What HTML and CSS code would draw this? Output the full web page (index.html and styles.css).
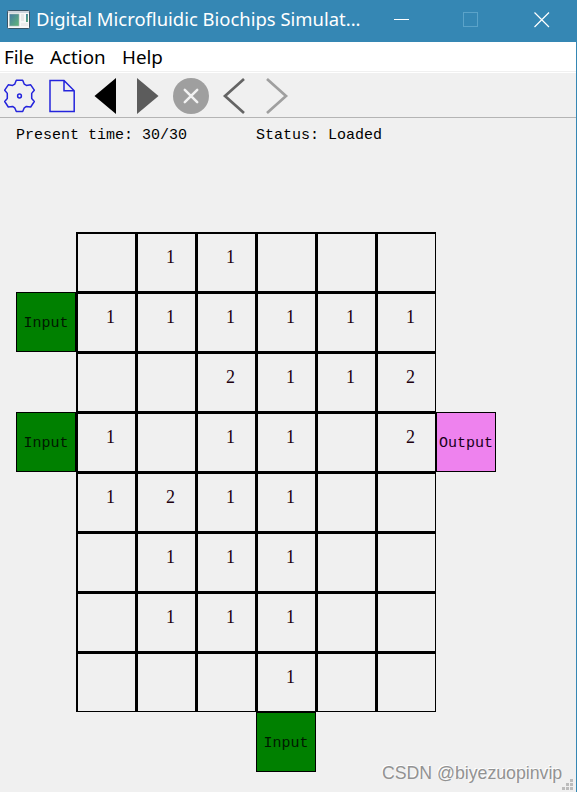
FILE: index.html
```html
<!doctype html>
<html lang="en">
<head>
  <meta charset="UTF-8">
  <meta name="viewport" content="width=device-width, initial-scale=1.0">
  <title>Digital Microfluidic Biochips Simulator</title>
  <link rel="stylesheet" href="styles.css">
</head>
<body>
<div class="window">

  <header class="titlebar">
    <svg class="app-icon" width="23" height="19" viewBox="0 0 23 19">
      <defs>
        <linearGradient id="pane" x1="0" y1="0" x2="1" y2="1">
          <stop offset="0" stop-color="#4579a3"/>
          <stop offset="1" stop-color="#62b877"/>
        </linearGradient>
      </defs>
      <rect x="0.5" y="0.5" width="22" height="18" rx="1" fill="#f8f8f8" stroke="#3a5566"/>
      <rect x="1" y="1" width="21" height="2" fill="#cdd3dc"/>
      <rect x="2.5" y="4" width="9.5" height="12" fill="url(#pane)" stroke="#a9b9b5" stroke-width="0.6"/>
      <rect x="14" y="4" width="3" height="7" fill="#e8e8e8"/>
      <rect x="19" y="4" width="2" height="8" fill="url(#pane)"/>
      <rect x="14" y="13" width="7" height="3" fill="#ececec"/>
    </svg>
    <span class="title">Digital Microfluidic Biochips Simulat...</span>
    <div class="controls">
      <svg width="16" height="16" viewBox="0 0 16 16"><path d="M0 8.5H15" stroke="#fff"/></svg>
      <svg width="16" height="16" viewBox="1 0 16 16"><rect x="0.5" y="1.5" width="14" height="14" fill="none" stroke="#5ba3c9"/></svg>
      <svg width="16" height="16" viewBox="0 0 16 16"><path d="M0.5 1.5L15 16M15 1.5L0.5 16" stroke="#fff" stroke-width="1.2"/></svg>
    </div>
  </header>

  <nav class="menubar">
    <span class="menu-file">File</span>
    <span class="menu-action">Action</span>
    <span class="menu-help">Help</span>
  </nav>

  <div class="toolbar">
    <svg width="300" height="44" viewBox="0 0 300 44">
      <g fill="none" stroke="#2424dc" stroke-width="1.5" stroke-linejoin="round">
        <path d="M16.3 7.2H22.7L24.3 11.2L26.4 12.4L30.7 11.8L34.3 17.2L31.7 20.4V25.6L34.3 28.5L30.7 34L26.4 33.4L24.3 34.8L22.7 38.5H16.3L14.7 34.8L12.6 33.4L8.3 34L4.7 28.5L7.3 25.6V20.4L4.7 17.2L8.3 11.8L12.6 12.4L14.7 11.2Z"/>
        <circle cx="19.5" cy="23" r="1.9"/>
        <path d="M50 7.4H64L74.2 17.8V38.4H50ZM64 7.4V17.8H74.2" stroke-linejoin="miter"/>
      </g>
      <path d="M116 5V41L94.5 23Z" fill="#000"/>
      <path d="M137 5V41L158.5 23Z" fill="#5c5c5c"/>
      <circle cx="191" cy="23" r="18" fill="#9f9f9f"/>
      <path d="M184.8 16.8L197.2 29.2M197.2 16.8L184.8 29.2" stroke="#f2f2f2" stroke-width="2.5" stroke-linecap="round"/>
      <path d="M244 6L225 23L244 40" fill="none" stroke="#646464" stroke-width="2.7"/>
      <path d="M267 6L286 23L267 40" fill="none" stroke="#9f9f9f" stroke-width="2.7"/>
    </svg>
  </div>

  <div class="info">
    <span class="time">Present time: 30/30</span>
    <span>Status: Loaded</span>
  </div>

  <main class="board">
    <div></div>
    <div class="cell"></div>
    <div class="cell">1</div>
    <div class="cell">1</div>
    <div class="cell"></div>
    <div class="cell"></div>
    <div class="cell"></div>
    <div></div>

    <div class="port input">Input</div>
    <div class="cell">1</div>
    <div class="cell">1</div>
    <div class="cell">1</div>
    <div class="cell">1</div>
    <div class="cell">1</div>
    <div class="cell">1</div>
    <div></div>

    <div></div>
    <div class="cell"></div>
    <div class="cell"></div>
    <div class="cell">2</div>
    <div class="cell">1</div>
    <div class="cell">1</div>
    <div class="cell">2</div>
    <div></div>

    <div class="port input">Input</div>
    <div class="cell">1</div>
    <div class="cell"></div>
    <div class="cell">1</div>
    <div class="cell">1</div>
    <div class="cell"></div>
    <div class="cell">2</div>
    <div class="port output">Output</div>

    <div></div>
    <div class="cell">1</div>
    <div class="cell">2</div>
    <div class="cell">1</div>
    <div class="cell">1</div>
    <div class="cell"></div>
    <div class="cell"></div>
    <div></div>

    <div></div>
    <div class="cell"></div>
    <div class="cell">1</div>
    <div class="cell">1</div>
    <div class="cell">1</div>
    <div class="cell"></div>
    <div class="cell"></div>
    <div></div>

    <div></div>
    <div class="cell"></div>
    <div class="cell">1</div>
    <div class="cell">1</div>
    <div class="cell">1</div>
    <div class="cell"></div>
    <div class="cell"></div>
    <div></div>

    <div></div>
    <div class="cell"></div>
    <div class="cell"></div>
    <div class="cell"></div>
    <div class="cell">1</div>
    <div class="cell"></div>
    <div class="cell"></div>
    <div></div>

    <div></div>
    <div></div>
    <div></div>
    <div></div>
    <div class="port input">Input</div>
  </main>

  <div class="watermark">CSDN @biyezuopinvip</div>
  <svg class="grip" width="11" height="11" viewBox="0 0 11 11" fill="#bcbcbc">
    <path d="M8 0h3v3h-3zM4 4h3v3h-3zM8 4h3v3h-3zM0 8h3v3h-3zM4 8h3v3h-3zM8 8h3v3h-3z"/>
  </svg>
</div>
</body>
</html>
```
FILE: styles.css
```css
* {
  box-sizing: border-box;
}

body {
  margin: 0;
  background-color: #f0f0f0;
}

.window {
  position: relative;
  width: 577px;
  height: 792px;
  overflow: hidden;
  border-right: 1px solid #3587b4;
  background-color: #f0f0f0;
}

svg {
  display: block;
  overflow: visible;
}

/* Title bar */
.titlebar {
  display: flex;
  align-items: center;
  height: 42px;
  padding: 0 26px 4px 7px;
  background-color: #3587b4;
  color: white;
}

.title {
  margin-left: 6px;
  font: 18.45px/38px "Noto Sans", sans-serif;
  white-space: nowrap;
  width: 326px;
}

.controls {
  display: flex;
  gap: 54px;
  margin-left: auto;
}

/* Menu */
.menubar {
  display: flex;
  height: 31px;
  padding-left: 4px;
  background: linear-gradient(#f0f0f0, #f0f0f0) 0 29px / 100% 1px no-repeat white;
  font: 18.8px/30px "Noto Sans", sans-serif;
}

.menu-file {
  width: 46px;
}

.menu-action {
  width: 72px;
}

.toolbar {
  height: 45px;
  border-bottom: 1px solid #b4b4b4;
}

.info {
  display: flex;
  height: 114px;
  padding-left: 16px;
  font: 15px/36px "Liberation Mono", monospace;
}

.time {
  width: 240px;
}

/* Chip */
.board {
  display: grid;
  grid-template-columns: repeat(8, 60px);
  grid-auto-rows: 60px;
  margin-left: 16px;
}

.cell {
  border: solid black;
  border-width: 2px 1px 1px 2px;
  padding: 13px 0 0 28px;
  font: 18px/20px "Liberation Serif", serif;
  color: #210010;
}

.port {
  border: 1px solid black;
  font: 15px/61px "Liberation Mono", monospace;
  text-align: center;
  color: #001800;
}

.input {
  background-color: #008000;
}

.output {
  background-color: #ee82ee;
  color: #180018;
}

.watermark {
  position: absolute;
  left: 382px;
  bottom: 8px;
  font: 17.7px/22px "Liberation Sans", sans-serif;
  color: #929292;
  text-shadow: -1px -1px 0 #fff;
}

.grip {
  position: absolute;
  right: 3px;
  bottom: 2px;
}
```
